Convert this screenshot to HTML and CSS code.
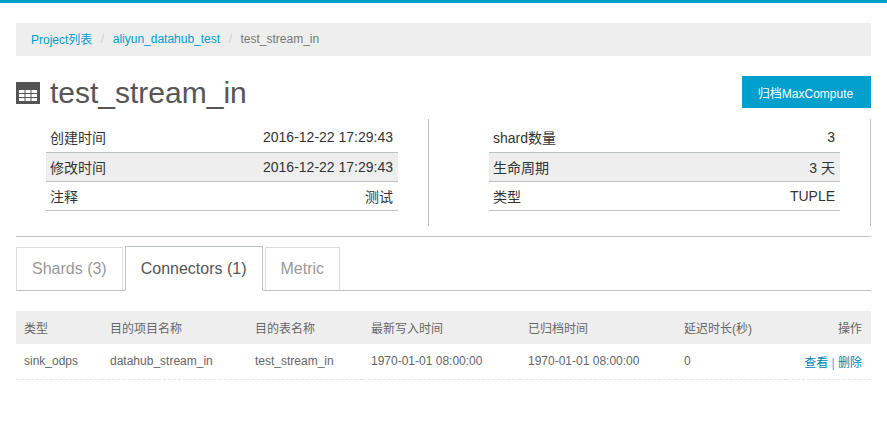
FILE: index.html
```html
<!DOCTYPE html>
<html lang="zh">
<head>
<meta charset="utf-8">
<title>test_stream_in</title>
<link rel="stylesheet" href="styles.css">
</head>
<body>
<div class="topbar"></div>
<main class="page">
  <nav class="crumbs">
    <a href="#">Project列表</a><span class="sep">/</span>
    <a href="#">aliyun_datahub_test</a><span class="sep">/</span>
    <span class="current">test_stream_in</span>
  </nav>
  <header class="title-row">
    <h1 class="title">
      <svg class="title-icon" width="24" height="24" viewBox="0 0 24 24" aria-hidden="true">
        <path fill="#555" d="M0 2h24v22H0z"/>
        <path fill="#fff" d="M3 10h5.500v3H3zM9.500 10h5v3h-5zM15.500 10H21v3h-5.500zM3 14h5.500v3H3zM9.500 14h5v3h-5zM15.500 14H21v3h-5.500zM3 18h5.500v3H3zM9.500 18h5v3h-5zM15.500 18H21v3h-5.500z"/>
      </svg>
      <span>test_stream_in</span>
    </h1>
    <button class="primary">归档MaxCompute</button>
  </header>
  <section class="info">
    <div class="info-col">
      <table class="kv">
        <tr><td>创建时间</td><td class="r">2016-12-22 17:29:43</td></tr>
        <tr class="alt"><td>修改时间</td><td class="r">2016-12-22 17:29:43</td></tr>
        <tr><td>注释</td><td class="r">测试</td></tr>
      </table>
    </div>
    <div class="info-col">
      <table class="kv">
        <tr><td>shard数量</td><td class="r">3</td></tr>
        <tr class="alt"><td>生命周期</td><td class="r">3 天</td></tr>
        <tr><td>类型</td><td class="r">TUPLE</td></tr>
      </table>
    </div>
  </section>
  <div class="tabs">
    <a class="tab" href="#">Shards (3)</a>
    <a class="tab active" href="#">Connectors (1)</a>
    <a class="tab" href="#">Metric</a>
  </div>
  <table class="grid">
    <thead>
      <tr>
        <th class="c1">类型</th><th class="c2">目的项目名称</th><th class="c3">目的表名称</th>
        <th class="c4">最新写入时间</th><th class="c5">已归档时间</th><th class="c6">延迟时长(秒)</th><th class="c7">操作</th>
      </tr>
    </thead>
    <tbody>
      <tr>
        <td>sink_odps</td><td>datahub_stream_in</td><td>test_stream_in</td>
        <td>1970-01-01 08:00:00</td><td>1970-01-01 08:00:00</td><td>0</td>
        <td class="c7"><a href="#">查看</a> <span class="pipe">|</span> <a href="#">删除</a></td>
      </tr>
    </tbody>
  </table>
</main>
</body>
</html>
```
FILE: styles.css
```css
* { box-sizing: border-box; }
html, body { margin: 0; padding: 0; }
body {
  background: #fff;
  color: #333;
  font-family: "Liberation Sans", "Noto Sans CJK SC", sans-serif;
  font-size: 14px;
}
a { text-decoration: none; }
.topbar { height: 3px; background: #009fcc; }
.page { padding: 20px 16px 0; }

.crumbs {
  display: flex;
  align-items: center;
  height: 33px;
  padding-left: 15px;
  padding-bottom: 2px;
  background: #eee;
  font-size: 12px;
  color: #777;
}
.crumbs a { color: #009fcc; }
.sep { color: #ccc; padding: 0 8.5px; }

.title-row {
  display: flex;
  justify-content: space-between;
  align-items: center;
  margin-top: 20px;
  height: 32px;
}
.title {
  display: flex;
  align-items: center;
  gap: 10px;
  margin: 0;
  font-size: 30px;
  font-weight: 400;
  color: #555;
}
.title span { padding-top: 2px; }
.title-icon { display: block; }
.primary {
  width: 129px;
  height: 32px;
  padding: 0 2px 0 0;
  border: 0;
  background: #009fcc;
  color: #fff;
  font: 12px "Liberation Sans", "Noto Sans CJK SC", sans-serif;
}

.info {
  display: grid;
  grid-template-columns: 413px 442px;
  margin-top: 11px;
  padding-bottom: 10px;
  border-bottom: 1px solid #bbc3c3;
  height: 118px;
}
.info-col {
  height: 107px;
  border-right: 1px solid #bbc3c3;
  padding-top: 4px;
}
.info-col:first-child { padding-left: 30px; padding-right: 30px; }
.info-col:last-child { padding-left: 60px; padding-right: 30px; }
.kv { width: 100%; border-collapse: collapse; color: #333; }
.kv td {
  height: 29px;
  padding: 0 5px 0 4px;
  border-bottom: 1px solid #bbc3c3;
}
.kv .r { text-align: right; }
.kv .alt td { background: #eee; }

.tabs {
  display: flex;
  gap: 2px;
  align-items: flex-end;
  margin-top: 10px;
  height: 44px;
  border-bottom: 1px solid #bbc3c3;
}
.tab {
  display: flex;
  align-items: center;
  height: 44px;
  padding: 0 15px;
  margin-bottom: -1px;
  border: 1px solid #ddd;
  border-bottom-color: #bbc3c3;
  background: #fff;
  color: #999;
  font-size: 16px;
}
.tab.active {
  border-color: #bbc3c3;
  border-bottom-color: #fff;
  color: #555;
  height: 45px;
}

.grid {
  width: 855px;
  margin-top: 20px;
  border-collapse: collapse;
  table-layout: fixed;
  font-size: 12px;
  color: #666;
}
.grid th {
  height: 33px;
  padding: 0 8px;
  background: #eee;
  font-weight: 400;
  text-align: left;
}
.grid td {
  height: 35px;
  padding: 0 8px;
  border-bottom: 1px dashed #e5e5e5;
}
.grid .c1 { width: 86px; }
.grid .c2 { width: 145px; }
.grid .c3 { width: 116px; }
.grid .c4 { width: 157px; }
.grid .c5 { width: 156px; }
.grid .c6 { width: 111px; }
.grid .c7 { text-align: right; padding-right: 9px; }
.grid a { color: #0086b3; }
.pipe { color: #33aadd; }
```
